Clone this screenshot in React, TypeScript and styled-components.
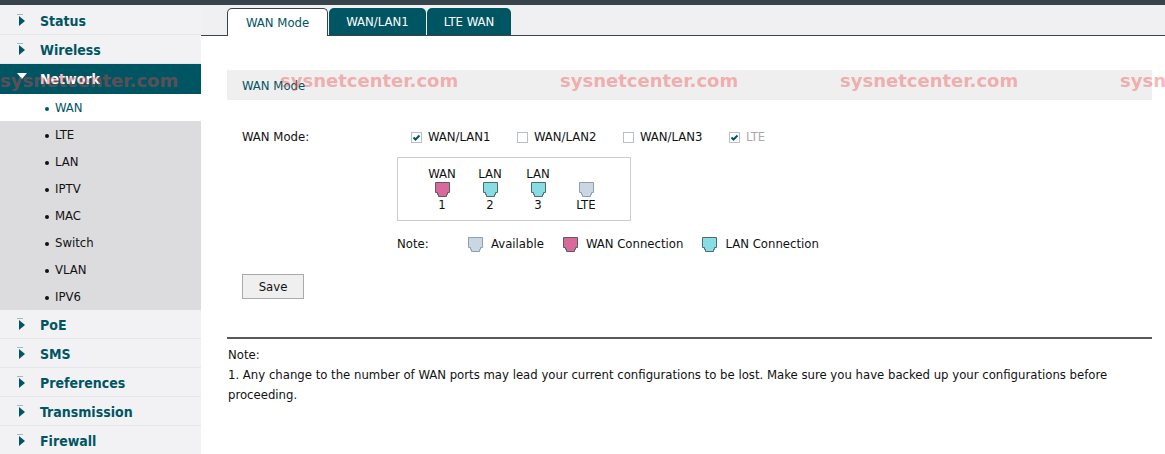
import React, { useState } from "react";
import styled, { createGlobalStyle } from "styled-components";

const teal = "#005562";
const slate = "#37444c";

const GlobalStyle = createGlobalStyle`
  * { box-sizing: border-box; }
  body {
    margin: 0;
    background: #fff;
    color: #111;
    font: 13px/20px "DejaVu Sans Condensed", "Noto Sans", sans-serif;
  }
  ul, p { margin: 0; padding: 0; list-style: none; }
  a { text-decoration: none; }
`;

const Page = styled.div`
  position: relative;
  border-top: 5px solid ${slate};
  display: flex;
  min-height: 100vh;
  overflow: hidden;
`;

const Sidebar = styled.nav`
  flex: 0 0 201px;
  padding-top: 1px;
  background: #f2f2f5;
`;

const MenuLink = styled.a<{ $open?: boolean }>`
  display: flex;
  align-items: center;
  height: ${(p) => (p.$open ? 30 : 29)}px;
  padding: ${(p) => (p.$open ? 0 : 2)}px 0 0 17px;
  gap: 13px;
  border-bottom: ${(p) => (p.$open ? "0" : "1px solid #e4e8ea")};
  background: ${(p) => (p.$open ? teal : "transparent")};
  color: ${(p) => (p.$open ? "#fff" : teal)};
  font: bold 14px/20px "DejaVu Sans Condensed", sans-serif;
`;

const SubMenu = styled.ul`
  background: #dcdcde;
`;

const SubLink = styled.a<{ $active?: boolean }>`
  display: flex;
  align-items: center;
  height: 27px;
  padding-left: 45px;
  gap: 6px;
  background: ${(p) => (p.$active ? "#fff" : "transparent")};
  color: ${(p) => (p.$active ? teal : "#111")};
  &::before {
    content: "";
    width: 4px;
    height: 4px;
    margin-top: 2px;
    border-radius: 2px;
    background: currentColor;
  }
`;

const Main = styled.main`
  flex: 1;
  min-width: 0;
`;

const TabBar = styled.div`
  display: flex;
  align-items: flex-end;
  gap: 1px;
  height: 31px;
  padding-left: 26px;
  background: #f0f0f2;
  border-bottom: 1px solid ${slate};
`;

const Tab = styled.button<{ $active?: boolean }>`
  height: ${(p) => (p.$active ? 28 : 27)}px;
  margin: 0 0 ${(p) => (p.$active ? -1 : 0)}px;
  padding: 0 ${(p) => (p.$active ? 18 : 17)}px;
  border: ${(p) => (p.$active ? `1px solid ${slate}` : "0")};
  border-bottom: 0;
  border-radius: 5px 5px 0 0;
  background: ${(p) => (p.$active ? "#fff" : teal)};
  color: ${(p) => (p.$active ? teal : "#fff")};
  font: inherit;
`;

const Content = styled.div`
  padding: 34px 13px 20px 26px;
`;

const SectionTitle = styled.h2`
  margin: 0 0 27px;
  padding: 6px 15px 4px;
  background: #efefef;
  color: ${teal};
  font: inherit;
`;

const Form = styled.form`
  padding-left: 15px;
`;

const Field = styled.div`
  display: grid;
  grid-template-columns: 155px 1fr;
`;

const Checks = styled.div`
  display: flex;
  padding-left: 14px;
`;

const Check = styled.label<{ $disabled?: boolean }>`
  display: flex;
  align-items: center;
  gap: 6px;
  min-width: 106px;
  color: ${(p) => (p.$disabled ? "#aaa" : "inherit")};
`;

const CheckBox = styled.span`
  display: grid;
  > * { grid-area: 1 / 1; }
  svg { pointer-events: none; }
`;

const CheckInput = styled.input`
  appearance: none;
  width: 11px;
  height: 11px;
  margin: 0;
  border: 1px solid #b9bfc6;
  background: #fff;
`;

const PortPanel = styled.div`
  display: flex;
  align-items: flex-end;
  width: fit-content;
  margin: 10px 0 13px;
  padding: 8px 20px 7px;
  border: 1px solid #ccc;
`;

const Port = styled.div`
  display: flex;
  flex-direction: column;
  align-items: center;
  width: 48px;
  line-height: 16px;
`;

const Legend = styled.div`
  display: flex;
  align-items: center;
`;

const LegendTitle = styled.span`
  width: 71px;
`;

const LegendItem = styled.span`
  display: flex;
  align-items: center;
  gap: 8px;
  margin-right: 19px;
`;

const SaveButton = styled.button`
  width: 62px;
  height: 25px;
  margin: 20px 0 38px;
  padding: 0;
  border: 1px solid #aaa;
  background: #efefef;
  color: inherit;
  font: inherit;
`;

const Notes = styled.section`
  border-top: 2px solid #595959;
  padding: 6px 24px 0 1px;
`;

const Watermark = styled.div`
  position: absolute;
  top: 65px;
  left: 0;
  display: flex;
  pointer-events: none;
  color: rgba(241, 69, 69, 0.4);
  font: bold 18px/22px "DejaVu Sans", sans-serif;
`;

const Mark = styled.span`
  flex: 0 0 280px;
`;

const Arrow = ({ open }: { open?: boolean }) => (
  <svg width="10" height="14" viewBox="0 0 10 14" aria-hidden="true">
    {open ? (
      <path d="M0 1h10L5 7z" fill="#fff" />
    ) : (
      <>
        <path d="M0 .5h6" stroke="#9dbcc3" />
        <path d="M2 2l6 5-6 5z" fill={teal} />
      </>
    )}
  </svg>
);

const portColors = {
  free: ["#cad7e3", "#8ba0b5"],
  wan: ["#d9699b", "#5c5c64"],
  lan: ["#88dde2", "#4f6a70"],
};
type Kind = keyof typeof portColors;

const PortIcon = ({ kind }: { kind: Kind }) => (
  <svg width="15" height="15" viewBox="0 0 15 15" aria-hidden="true">
    <path
      d="M.5.5h14v10h-2v2h-1v2h-8v-2h-1v-2h-2z"
      fill={portColors[kind][0]}
      stroke={portColors[kind][1]}
    />
  </svg>
);

const before = ["Status", "Wireless"];
const after = ["PoE", "SMS", "Preferences", "Transmission", "Firewall"];
const subs = ["WAN", "LTE", "LAN", "IPTV", "MAC", "Switch", "VLAN", "IPV6"];
const tabs = ["WAN Mode", "WAN/LAN1", "LTE WAN"];
const ports: { top?: string; kind: Kind; bottom: string }[] = [
  { top: "WAN", kind: "wan", bottom: "1" },
  { top: "LAN", kind: "lan", bottom: "2" },
  { top: "LAN", kind: "lan", bottom: "3" },
  { kind: "free", bottom: "LTE" },
];
const legend: [Kind, string][] = [
  ["free", "Available"],
  ["wan", "WAN Connection"],
  ["lan", "LAN Connection"],
];

const MenuItem = ({ name, open }: { name: string; open?: boolean }) => (
  <MenuLink href="#" $open={open}>
    <Arrow open={open} />
    {name}
  </MenuLink>
);

export default function App() {
  const [checks, setChecks] = useState([
    { name: "WAN/LAN1", on: true, disabled: false },
    { name: "WAN/LAN2", on: false, disabled: false },
    { name: "WAN/LAN3", on: false, disabled: false },
    { name: "LTE", on: true, disabled: true },
  ]);
  const toggle = (name: string) =>
    setChecks((list) => list.map((c) => (c.name === name ? { ...c, on: !c.on } : c)));

  return (
    <>
      <GlobalStyle />
      <Page>
        <Sidebar>
          {before.map((n) => <MenuItem key={n} name={n} />)}
          <MenuItem name="Network" open />
          <SubMenu>
            {subs.map((n) => (
              <li key={n}><SubLink href="#" $active={n === "WAN"}>{n}</SubLink></li>
            ))}
          </SubMenu>
          {after.map((n) => <MenuItem key={n} name={n} />)}
        </Sidebar>
        <Main>
          <TabBar>
            {tabs.map((n, i) => <Tab key={n} type="button" $active={i === 0}>{n}</Tab>)}
          </TabBar>
          <Content>
            <SectionTitle>WAN Mode</SectionTitle>
            <Form onSubmit={(e) => e.preventDefault()}>
              <Field>
                <span>WAN Mode:</span>
                <div>
                  <Checks>
                    {checks.map((c) => (
                      <Check key={c.name} $disabled={c.disabled}>
                        <CheckBox>
                          <CheckInput
                            type="checkbox"
                            checked={c.on}
                            disabled={c.disabled}
                            onChange={() => toggle(c.name)}
                          />
                          {c.on && (
                            <svg width="11" height="11" viewBox="0 0 11 11" aria-hidden="true">
                              <path d="M2.500 5.500l2 2 4-4" fill="none" stroke={teal} strokeWidth="2" />
                            </svg>
                          )}
                        </CheckBox>
                        {c.name}
                      </Check>
                    ))}
                  </Checks>
                  <PortPanel>
                    {ports.map((p, i) => (
                      <Port key={i}>
                        {p.top && <span>{p.top}</span>}
                        <PortIcon kind={p.kind} />
                        <span>{p.bottom}</span>
                      </Port>
                    ))}
                  </PortPanel>
                  <Legend>
                    <LegendTitle>Note:</LegendTitle>
                    {legend.map(([kind, text]) => (
                      <LegendItem key={kind}><PortIcon kind={kind} />{text}</LegendItem>
                    ))}
                  </Legend>
                </div>
              </Field>
              <SaveButton type="submit">Save</SaveButton>
            </Form>
            <Notes>
              <p>Note:</p>
              <p>
                1. Any change to the number of WAN ports may lead your current configurations to be
                lost. Make sure you have backed up your configurations before proceeding.
              </p>
            </Notes>
          </Content>
        </Main>
        <Watermark aria-hidden="true">
          {[0, 1, 2, 3, 4].map((i) => <Mark key={i}>sysnetcenter.com</Mark>)}
        </Watermark>
      </Page>
    </>
  );
}
